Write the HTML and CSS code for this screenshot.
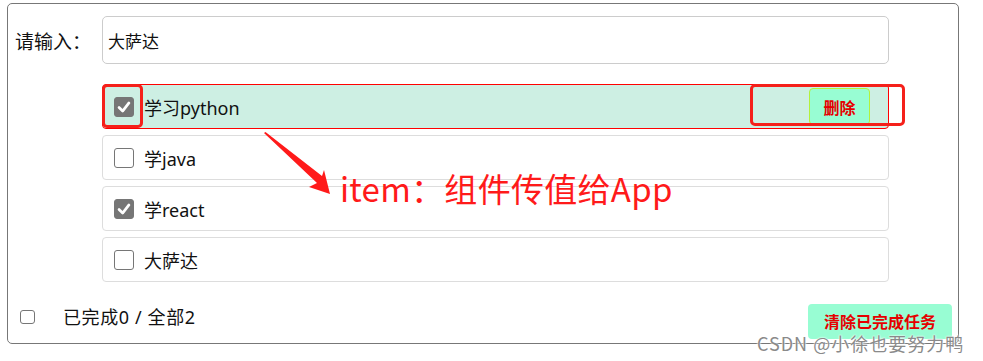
FILE: index.html
```html
<!DOCTYPE html>
<html lang="zh">
<head>
<meta charset="utf-8">
<link rel="stylesheet" href="styles.css">
</head>
<body>
<div class="app">
  <div class="header">
    <label class="label">请输入：</label>
    <div class="input">大萨达</div>
  </div>
  <ul class="list">
    <li class="item active">
      <span class="cb checked"><svg viewBox="0 0 20 20"><path d="M4.5 10.5 L8.5 14.5 L15.5 5.5" fill="none" stroke="#fff" stroke-width="3" stroke-linecap="round" stroke-linejoin="round"/></svg></span>
      <span class="text">学习python</span>
      <button class="del">删除</button>
    </li>
    <li class="item">
      <span class="cb"></span>
      <span class="text">学java</span>
    </li>
    <li class="item">
      <span class="cb checked"><svg viewBox="0 0 20 20"><path d="M4.5 10.5 L8.5 14.5 L15.5 5.5" fill="none" stroke="#fff" stroke-width="3" stroke-linecap="round" stroke-linejoin="round"/></svg></span>
      <span class="text">学react</span>
    </li>
    <li class="item">
      <span class="cb"></span>
      <span class="text">大萨达</span>
    </li>
  </ul>
  <div class="footer">
    <span class="cb small"></span>
    <span class="count">已完成0 / 全部2</span>
    <button class="clear">清除已完成任务</button>
  </div>
</div>
<div class="mark mark-cb"></div>
<div class="mark mark-del"></div>
<svg class="arrow" width="80" height="70" viewBox="0 0 80 70"><path d="M0 0 L1.5 -1 L58 43 L60 37 L66 61 L45 54 L53 50 Z" fill="#ff1a1a" transform="translate(8 8)"/></svg>
<div class="note">item：组件传值给App</div>
<div class="watermark">CSDN @小徐也要努力鸭</div>
</body>
</html>
```
FILE: styles.css
```css
* { box-sizing: border-box; }
body {
  margin: 0;
  background: #fff;
  font-family: "Noto Sans", "Noto Sans CJK SC", sans-serif;
  color: #111;
  position: relative;
  width: 983px;
  height: 361px;
  overflow: hidden;
}
.app {
  margin: 3px 0 0 7px;
  width: 952px;
  height: 341px;
  border: 1px solid #777;
  border-radius: 5px;
  padding: 12px 6px 0 7px;
}
.header {
  display: flex;
  align-items: center;
  height: 48px;
}
.label {
  width: 87px;
  font-size: 19px;
  color: #111;
  font-family: "Noto Sans CJK SC", sans-serif;
}
.input {
  width: 787px;
  height: 48px;
  border: 1px solid #ccc;
  border-radius: 5px;
  display: flex;
  align-items: center;
  padding-left: 5px;
  font-size: 17px;
  font-family: "Noto Sans CJK SC", sans-serif;
}
.list {
  list-style: none;
  margin: 20px 0 0 87px;
  padding: 0;
  width: 787px;
  display: flex;
  flex-direction: column;
  gap: 6px;
}
.item {
  height: 45px;
  border: 1px solid #ddd;
  border-radius: 4px;
  display: flex;
  align-items: center;
  padding: 0 18px 0 11px;
}
.item.active {
  background: #cdefe3;
  border-color: #f00;
}
.cb {
  width: 20px;
  height: 20px;
  border: 1.5px solid #767676;
  border-radius: 3px;
  background: #fff;
  flex: none;
  display: flex;
}
.cb.checked {
  background: #767676;
  border-color: #767676;
}
.cb svg { width: 100%; height: 100%; }
.cb.small {
  width: 15px;
  height: 14px;
  border-width: 1px;
  margin-bottom: 8px;
}
.text {
  margin-left: 10px;
  font-size: 18px;
  color: #111;
}
.del {
  margin-left: auto;
  width: 61px;
  height: 37px;
  background: #98fdd3;
  border: 1px solid #b4f13a;
  border-radius: 4px;
  color: #e60000;
  font-weight: bold;
  font-size: 16px;
  font-family: "Noto Sans CJK SC", sans-serif;
  padding: 0;
}
.footer {
  display: flex;
  align-items: center;
  margin-top: 21px;
  height: 36px;
  padding-left: 5px;
}
.count {
  margin-left: 28px;
  margin-bottom: 10px;
  font-size: 18px;
  letter-spacing: 0.6px;
  color: #111;
}
.clear {
  margin-left: auto;
  width: 144px;
  height: 35px;
  background: #98fdd3;
  border: none;
  border-radius: 4px;
  color: #e60000;
  font-weight: bold;
  font-size: 16px;
  font-family: "Noto Sans CJK SC", sans-serif;
  padding: 0;
}
.mark {
  position: absolute;
  border: 3px solid #f5201a;
  border-radius: 5px;
}
.mark-cb { left: 102px; top: 84px; width: 41px; height: 44px; }
.mark-del { left: 750px; top: 84px; width: 155px; height: 42px; }
.arrow { position: absolute; left: 256px; top: 125px; }
.note {
  position: absolute;
  left: 340px;
  top: 165px;
  font-size: 33px;
  letter-spacing: 0.3px;
  color: #ff1a1a;
  line-height: 46px;
  font-family: "Noto Sans CJK SC", sans-serif;
}
.watermark {
  position: absolute;
  left: 757px;
  top: 330px;
  font-size: 18px;
  color: #8a8a8a;
  text-shadow: 0 0 2px #fff, 0 0 2px #fff;
  font-family: "Noto Sans CJK SC", sans-serif;
  letter-spacing: 1px;
}
```
